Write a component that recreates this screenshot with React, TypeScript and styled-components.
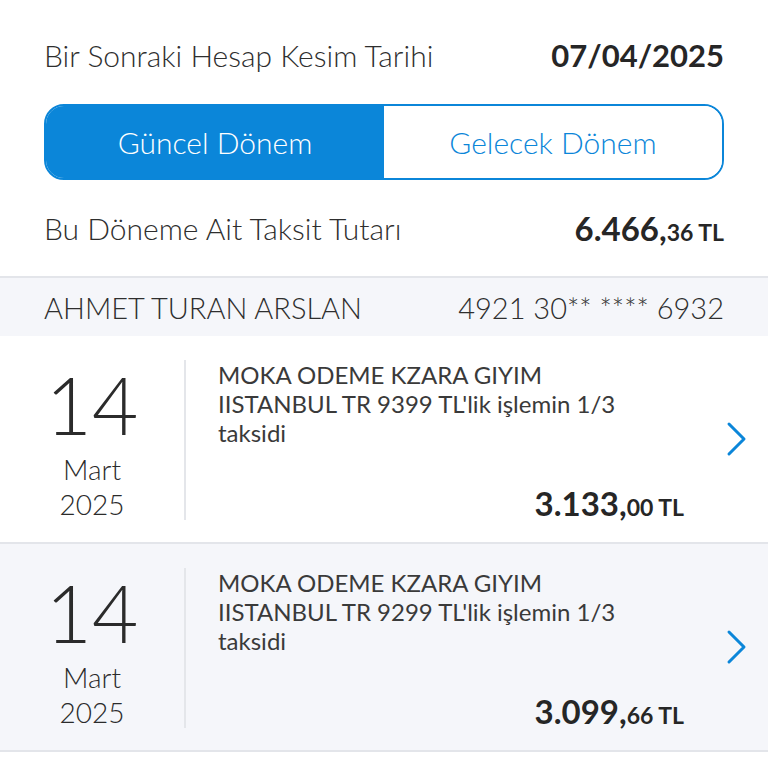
import styled, { createGlobalStyle } from "styled-components";
import { useState } from "react";

const GlobalStyle = createGlobalStyle`
    body {
        margin: 0;
        background: #ffffff;
        font-family: Lato, "Open Sans", "Noto Sans", sans-serif;
        color: #2b2b2b;
    }
`;

const BLUE = "#0b86d9";

const Page = styled.div`
    width: 768px;
    background: #ffffff;
`;

const Summary = styled.section`
    padding: 25px 44px 0;
    border-bottom: 2px solid #e3e5ea;
`;

const InfoRow = styled.div<{ $height: number }>`
    height: ${p => p.$height}px;
    display: flex;
    align-items: center;
    justify-content: space-between;
`;

const Label = styled.span`
    font-size: 30px;
    font-weight: 300;
    color: #2e2e2e;
`;

const DateValue = styled.span`
    font-size: 31px;
    font-weight: 700;
    color: #262626;
`;

const Segment = styled.div`
    margin-top: 19px;
    height: 76px;
    display: flex;
    border: 2px solid ${BLUE};
    border-radius: 20px;
    overflow: hidden;
    box-sizing: border-box;
`;

const SegmentButton = styled.button<{ $active: boolean }>`
    flex: 1;
    border: none;
    margin: 0;
    padding: 0;
    font-family: inherit;
    font-size: 30px;
    font-weight: 300;
    cursor: pointer;
    background: ${p => (p.$active ? BLUE : "#ffffff")};
    color: ${p => (p.$active ? "#ffffff" : BLUE)};
`;

const Amount = styled.span`
    font-size: 33px;
    font-weight: 700;
    color: #262626;
`;

const AmountSmall = styled.span`
    font-size: 23px;
    font-weight: 700;
    color: #262626;
`;

const CardHeader = styled.div`
    height: 58px;
    padding: 0 44px;
    background: #f5f6fa;
    display: flex;
    align-items: center;
    justify-content: space-between;
    font-size: 29px;
    font-weight: 300;
    color: #2e2e2e;
`;

const Item = styled.div<{ $shaded: boolean }>`
    height: 206px;
    display: flex;
    align-items: stretch;
    background: ${p => (p.$shaded ? "#f5f6fa" : "#ffffff")};
    border-bottom: 2px solid #e3e5ea;
`;

const DateCol = styled.div`
    width: 184px;
    margin: 24px 0 22px;
    display: flex;
    flex-direction: column;
    align-items: center;
    color: #2b2b2b;
`;

const Day = styled.div`
    font-size: 80px;
    font-weight: 300;
    line-height: 72px;
    margin-top: 8px;
`;

const MonthYear = styled.div`
    margin-top: 12px;
    font-size: 28px;
    font-weight: 300;
    line-height: 35px;
    text-align: center;
`;

const Content = styled.div`
    flex: 1;
    margin: 24px 0 22px;
    padding-left: 32px;
    border-left: 2px solid #e4e6ea;
    display: flex;
    flex-direction: column;
    justify-content: space-between;
`;

const Description = styled.div`
    font-size: 24px;
    font-weight: 400;
    line-height: 29px;
    color: #3a3a3a;
    max-width: 430px;
`;

const ItemAmount = styled.div`
    align-self: flex-end;
    line-height: 20px;
`;

const ChevronCol = styled.div`
    width: 84px;
    display: flex;
    align-items: center;
    justify-content: flex-end;
    padding-right: 20px;
    box-sizing: border-box;
`;

type Installment = {
    day: string;
    month: string;
    year: string;
    description: string;
    whole: string;
    cents: string;
};

const installments: Installment[] = [
    {
        day: "14",
        month: "Mart",
        year: "2025",
        description: "MOKA ODEME KZARA GIYIM IISTANBUL TR 9399 TL'lik işlemin 1/3 taksidi",
        whole: "3.133,",
        cents: "00 TL",
    },
    {
        day: "14",
        month: "Mart",
        year: "2025",
        description: "MOKA ODEME KZARA GIYIM IISTANBUL TR 9299 TL'lik işlemin 1/3 taksidi",
        whole: "3.099,",
        cents: "66 TL",
    },
];

const Chevron = () => (
    <svg width="22" height="36" viewBox="0 0 22 36" fill="none">
        <path d="M3 3 L18 18 L3 33" stroke={BLUE} strokeWidth="3" strokeLinecap="round" strokeLinejoin="round" />
    </svg>
);

export default function App() {
    const [period, setPeriod] = useState<"current" | "next">("current");

    return (
        <Page>
            <GlobalStyle />
            <Summary>
                <InfoRow $height={60}>
                    <Label>Bir Sonraki Hesap Kesim Tarihi</Label>
                    <DateValue>07/04/2025</DateValue>
                </InfoRow>
                <Segment>
                    <SegmentButton $active={period === "current"} onClick={() => setPeriod("current")}>
                        Güncel Dönem
                    </SegmentButton>
                    <SegmentButton $active={period === "next"} onClick={() => setPeriod("next")}>
                        Gelecek Dönem
                    </SegmentButton>
                </Segment>
                <InfoRow $height={96}>
                    <Label>Bu Döneme Ait Taksit Tutarı</Label>
                    <span>
                        <Amount>6.466,</Amount>
                        <AmountSmall>36 TL</AmountSmall>
                    </span>
                </InfoRow>
            </Summary>

            <CardHeader>
                <span>AHMET TURAN ARSLAN</span>
                <span>4921 30** **** 6932</span>
            </CardHeader>

            {installments.map((it, i) => (
                <Item key={i} $shaded={i % 2 === 1}>
                    <DateCol>
                        <Day>{it.day}</Day>
                        <MonthYear>
                            {it.month}
                            <br />
                            {it.year}
                        </MonthYear>
                    </DateCol>
                    <Content>
                        <Description>{it.description}</Description>
                        <ItemAmount>
                            <Amount>{it.whole}</Amount>
                            <AmountSmall>{it.cents}</AmountSmall>
                        </ItemAmount>
                    </Content>
                    <ChevronCol>
                        <Chevron />
                    </ChevronCol>
                </Item>
            ))}
        </Page>
    );
}
